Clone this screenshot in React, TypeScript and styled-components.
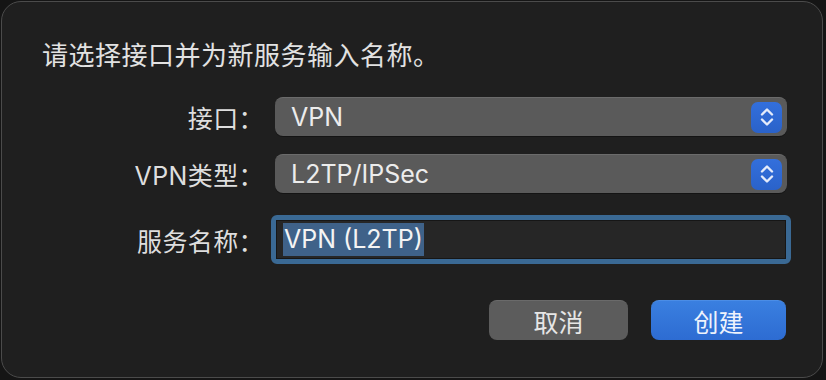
import styled, { createGlobalStyle } from "styled-components";

const GlobalStyle = createGlobalStyle`
  html, body {
    margin: 0;
    padding: 0;
    background: #151515;
  }
  body {
    font-family: "Inter", "Noto Sans CJK SC", sans-serif;
    -webkit-font-smoothing: antialiased;
  }
`;

const Chevrons = () => (
  <svg width="18" height="22" viewBox="0 0 18 22" fill="none">
    <path
      d="M4 8.5 L9 3.5 L14 8.5"
      stroke="#e4ebfa"
      strokeWidth="2.4"
      strokeLinecap="round"
      strokeLinejoin="round"
    />
    <path
      d="M4 13.5 L9 18.5 L14 13.5"
      stroke="#e4ebfa"
      strokeWidth="2.4"
      strokeLinecap="round"
      strokeLinejoin="round"
    />
  </svg>
);

const App = () => {
  return (
    <>
      <GlobalStyle />
      <Dialog>
        <Title>请选择接口并为新服务输入名称。</Title>
        <Form>
          <Label>接口：</Label>
          <Popup>
            <PopupValue>VPN</PopupValue>
            <Stepper>
              <Chevrons />
            </Stepper>
          </Popup>

          <Label>VPN类型：</Label>
          <Popup>
            <PopupValue>L2TP/IPSec</PopupValue>
            <Stepper>
              <Chevrons />
            </Stepper>
          </Popup>

          <Label $spaced>服务名称：</Label>
          <FocusRing $spaced>
            <Field>
              <Selected>VPN (L2TP)</Selected>
            </Field>
          </FocusRing>
        </Form>
        <Buttons>
          <Button>取消</Button>
          <Button $primary>创建</Button>
        </Buttons>
      </Dialog>
    </>
  );
};

const Dialog = styled.div`
  box-sizing: border-box;
  margin: 1px 0 0 1px;
  width: 822px;
  height: 377px;
  background: #1f1f1f;
  border: 1px solid #4b4b4b;
  border-radius: 20px;
  display: flex;
  flex-direction: column;
  color: #e3e3e3;
`;

const Title = styled.div`
  margin: 37px 0 0 40px;
  font-size: 26px;
  line-height: 34px;
  letter-spacing: 0.5px;
  color: #e2e2e2;
`;

const Form = styled.div`
  display: grid;
  grid-template-columns: 262px 512px;
  column-gap: 11px;
  row-gap: 18px;
  align-items: center;
  margin-top: 24px;
`;

const Label = styled.div<{ $spaced?: boolean }>`
  justify-self: end;
  font-size: 25px;
  letter-spacing: 0.4px;
  color: #dedede;
  margin-top: ${(p) => (p.$spaced ? "4px" : "0")};
`;

const Popup = styled.div`
  box-sizing: border-box;
  height: 39px;
  background: #5a5a5a;
  border-top: 1px solid #6b6b6b;
  border-radius: 8px;
  display: flex;
  align-items: center;
  justify-content: space-between;
  padding: 0 5px 0 16px;
  box-shadow: 0 1px 0 rgba(0, 0, 0, 0.35);
`;

const PopupValue = styled.span`
  font-size: 25px;
  color: #ececec;
`;

const Stepper = styled.div`
  width: 31px;
  height: 31px;
  border-radius: 7px;
  background: linear-gradient(#336fdc, #2a62c9);
  display: flex;
  align-items: center;
  justify-content: center;
`;

const FocusRing = styled.div<{ $spaced?: boolean }>`
  margin: ${(p) => (p.$spaced ? "4px" : "0")} -4px 0 -4px;
  border: 5px solid #3a6994;
  border-radius: 6px;
  height: 49px;
  box-sizing: border-box;
  display: flex;
`;

const Field = styled.div`
  flex: 1;
  background: #262626;
  border: 1px solid #161616;
  display: flex;
  align-items: center;
  padding-left: 6px;
`;

const Selected = styled.span`
  background: #3f6289;
  color: #f4f4f4;
  font-size: 25px;
  line-height: 33px;
  padding: 0 1px;
`;

const Buttons = styled.div`
  display: flex;
  justify-content: flex-end;
  gap: 23px;
  margin: 36px 36px 0 0;
`;

const Button = styled.div<{ $primary?: boolean }>`
  width: ${(p) => (p.$primary ? "135px" : "139px")};
  height: 40px;
  border-radius: 8px;
  display: flex;
  align-items: center;
  justify-content: center;
  font-size: 25px;
  color: ${(p) => (p.$primary ? "#eef3fc" : "#e6e6e6")};
  background: ${(p) =>
    p.$primary ? "linear-gradient(#3a7fe0, #2d6cd2)" : "#5c5c5c"};
  border-top: 1px solid ${(p) => (p.$primary ? "#4b8de6" : "#6a6a6a")};
  box-sizing: border-box;
`;

export default App;
